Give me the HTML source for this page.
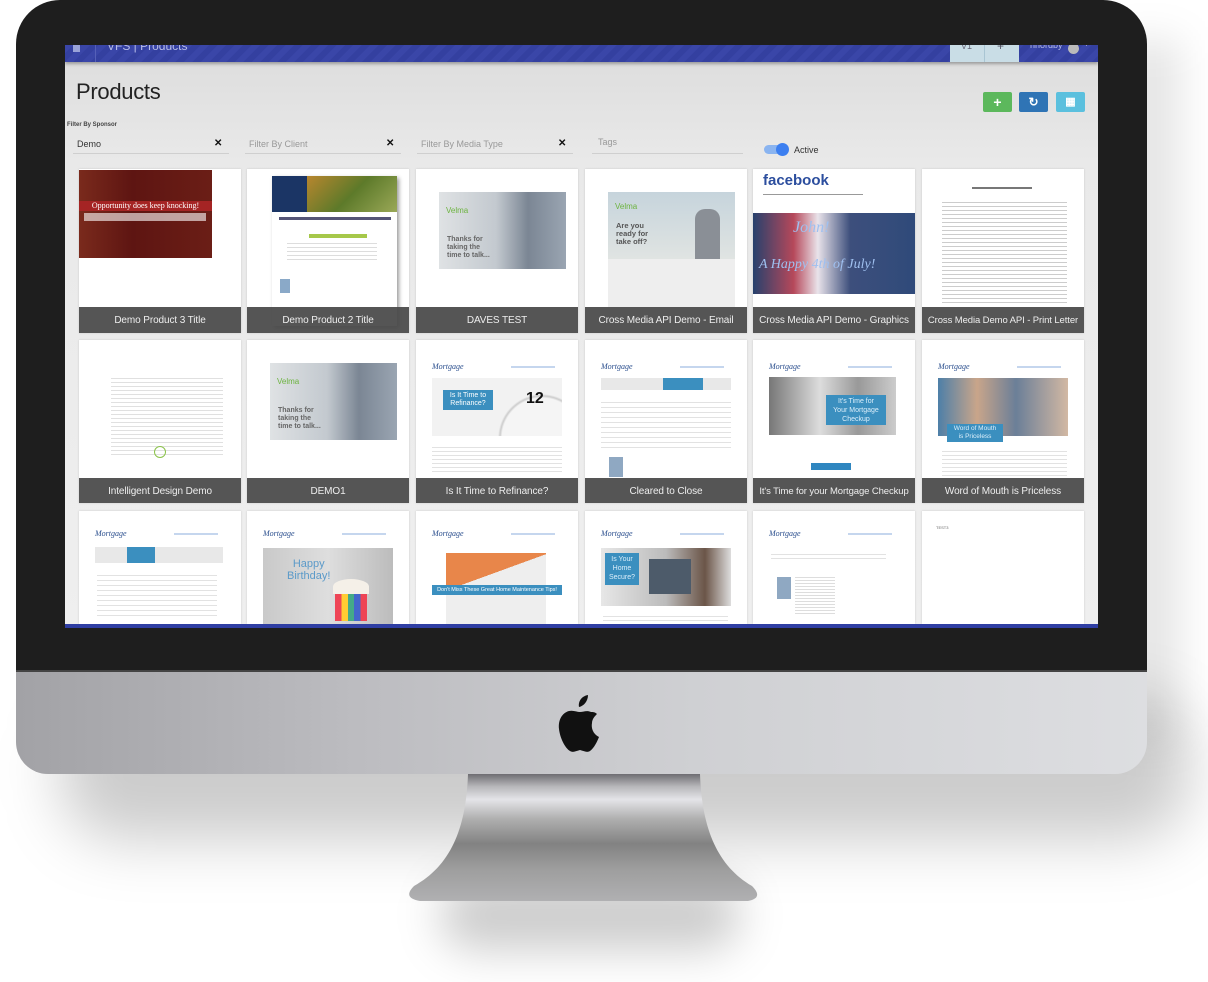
<!DOCTYPE html>
<html><head><meta charset="utf-8"><style>
*{margin:0;padding:0;box-sizing:border-box}
body{width:1208px;height:982px;background:#fff;position:relative;overflow:hidden;font-family:"Liberation Sans",sans-serif}
.a{position:absolute}
.card{position:absolute;width:162px;background:#fff;overflow:hidden;box-shadow:0 0 2px rgba(0,0,0,.15)}
.lbl{position:absolute;left:0;right:0;height:26px;background:rgba(72,72,72,.93);color:#eee;font-size:10px;text-align:center;line-height:27px;white-space:nowrap;letter-spacing:-.1px}
.ln{position:absolute;height:2px;background:#d6d6d6}
.logo{position:absolute;font-family:"Liberation Serif",serif;font-style:italic;color:#2b4f8e;font-size:8px}
.mail{position:absolute;font-size:3px;color:#4a7fc0;height:2px;width:44px;background:#c5d6ee}
.btn{position:absolute;top:92px;width:29px;height:20px;border-radius:2px;color:#fff;text-align:center;line-height:20px;font-size:14px;font-weight:bold}
.x{position:absolute;font-size:10px;font-weight:bold;color:#111}
.f{position:absolute;font-size:9px;color:#999}
.ul{position:absolute;height:1px;background:#cfcfcf}
.tab{position:absolute;height:12px;background:#e8e8e8}
</style></head><body>
<!-- shadow -->
<div class="a" style="left:60px;top:700px;width:1130px;height:140px;border-radius:60px;background:rgba(0,0,0,.2);filter:blur(30px)"></div>
<div class="a" style="left:440px;top:880px;width:300px;height:70px;border-radius:40px;background:rgba(0,0,0,.2);filter:blur(22px)"></div>
<div class="a" style="left:1120px;top:40px;width:60px;height:700px;background:rgba(0,0,0,.1);filter:blur(20px)"></div>
<!-- stand -->
<svg class="a" style="left:0;top:0" width="1208" height="982">
<defs><linearGradient id="st" x1="0" y1="774" x2="0" y2="901" gradientUnits="userSpaceOnUse">
<stop offset="0" stop-color="#6e6d72"/><stop offset=".1" stop-color="#b8b8bb"/><stop offset=".2" stop-color="#e4e4e8"/><stop offset=".35" stop-color="#b0b0b0"/><stop offset=".55" stop-color="#828282"/><stop offset=".75" stop-color="#9e9e9e"/><stop offset="1" stop-color="#b0b0b2"/></linearGradient></defs>
<path d="M468,774 L700,774 C702,830 718,866 752,886 Q764,898 748,901 L420,901 Q402,898 414,886 C450,866 466,830 468,774Z" fill="url(#st)"/>
</svg>
<!-- chin -->
<div class="a" style="left:16px;top:660px;width:1131px;height:114px;border-radius:0 0 32px 32px;background:linear-gradient(90deg,#a2a2a6 0%,#bcbcc0 30%,#cfd0d3 60%,#dddee1 100%)"></div>
<!-- apple -->
<svg class="a" style="left:555px;top:693px" width="50" height="60" viewBox="0 0 50 60">
<path d="M33,2 C33,8 29,13 24,14 C23,8 27,3 33,2Z M36,19 C32,17 28,19 25,19 C22,19 18,17 14,18 C7,20 3,27 4,36 C5,45 10,55 15,58 C18,60 21,58 25,57 C29,58 32,60 35,58 C39,55 42,49 44,44 C38,41 36,35 37,30 C37,26 40,23 42,21 C40,19 38,19 36,19Z" fill="#111"/>
</svg>
<!-- bezel -->
<div class="a" style="left:16px;top:0;width:1131px;height:672px;border-radius:44px 44px 0 0;background:#1e1e1e;border-bottom:2px solid #444"></div>
<!-- screen -->
<div class="a" style="left:65px;top:45px;width:1033px;height:583px;background:linear-gradient(180deg,#dcdcdc 0%,#e9e9e9 20%,#efefef 100%);overflow:hidden">
 <div class="a" style="left:0;top:0;width:1033px;height:17px;background:repeating-linear-gradient(135deg,#3a46a8 0 6px,#3440a0 6px 12px);box-shadow:0 2px 3px rgba(0,0,0,.3)">
  <div class="a" style="left:8px;top:0;width:7px;height:7px;background:#9aa3d8"></div>
  <div class="a" style="left:30px;top:0;width:1px;height:17px;background:#5560b8"></div>
  <div class="a" style="left:42px;top:-6px;color:#b8bde8;font-size:12px">VFS | Products</div>
  <div class="a" style="left:885px;top:0;width:69px;height:17px;background:#c9dde6"></div>
  <div class="a" style="left:919px;top:0;width:1px;height:17px;background:#a9c5d3"></div>
  <div class="a" style="left:896px;top:-4px;font-size:9px;color:#667">V1</div>
  <div class="a" style="left:932px;top:-6px;font-size:12px;color:#556">+</div>
  <div class="a" style="left:965px;top:-5px;font-size:9px;color:#b8bde8">nnordby</div>
  <div class="a" style="left:1003px;top:-2px;width:11px;height:11px;border-radius:50%;background:#bbb"></div>
  <div class="a" style="left:1018px;top:-4px;font-size:7px;color:#ccd">▼</div>
 </div>
 <div class="a" style="left:11px;top:34px;font-size:22px;color:#222;letter-spacing:-.3px">Products</div>
 <div class="a" style="left:2px;top:77px;font-size:6px;color:#444;font-weight:bold">Filter By Sponsor</div>
</div>
<div class="btn" style="left:983px;background:#5cb85c">+</div>
<div class="btn" style="left:1019px;background:#2f74b5;font-size:12px">↻</div>
<div class="btn" style="left:1056px;background:#5bc0de;font-size:11px">▦</div>
<div class="f" style="left:77px;top:139px;color:#333">Demo</div><div class="x" style="left:214px;top:138px">✕</div><div class="ul" style="left:73px;top:153px;width:156px"></div>
<div class="f" style="left:249px;top:139px">Filter By Client</div><div class="x" style="left:386px;top:138px">✕</div><div class="ul" style="left:245px;top:153px;width:156px"></div>
<div class="f" style="left:421px;top:139px">Filter By Media Type</div><div class="x" style="left:558px;top:138px">✕</div><div class="ul" style="left:417px;top:153px;width:156px"></div>
<div class="f" style="left:598px;top:137px">Tags</div><div class="ul" style="left:592px;top:153px;width:151px"></div>
<div class="a" style="left:764px;top:145px;width:24px;height:9px;border-radius:5px;background:#8ab4f0"></div>
<div class="a" style="left:776px;top:143px;width:13px;height:13px;border-radius:50%;background:#3c7ff0"></div>
<div class="a" style="left:794px;top:145px;font-size:9px;color:#333">Active</div>

<!-- Row 1 -->
<div class="card" style="left:79px;top:169px;height:164px">
 <div class="a" style="left:0;top:1px;width:133px;height:88px;background:linear-gradient(90deg,#7a2a1c,#5e1512 40%,#6b1e16)"></div>
 <div class="a" style="left:0;top:32px;width:133px;height:10px;background:#a52424;color:#fff;font-family:'Liberation Serif',serif;font-size:8px;text-align:center;line-height:10px">Opportunity does keep knocking!</div>
 <div class="a" style="left:5px;top:44px;width:122px;height:8px;background:rgba(255,255,255,.6)"></div>
 <div class="lbl" style="top:138px">Demo Product 3 Title</div>
</div>
<div class="card" style="left:247px;top:169px;height:164px">
 <div class="a" style="left:25px;top:7px;width:125px;height:150px;background:#fff;box-shadow:2px 2px 4px rgba(0,0,0,.4)"></div>
 <div class="a" style="left:25px;top:7px;width:35px;height:36px;background:#1b3565"></div>
 <div class="a" style="left:60px;top:7px;width:90px;height:36px;background:linear-gradient(135deg,#b8862e,#5d7a2a 50%,#9aa857)"></div>
 <div class="a" style="left:32px;top:48px;width:112px;height:3px;background:#557"></div>
 <div class="a" style="left:62px;top:65px;width:58px;height:4px;background:#a6c84a"></div>
 <div class="ln" style="left:40px;top:74px;width:90px;height:20px;background:repeating-linear-gradient(#ddd 0 1px,#fff 1px 4px)"></div>
 <div class="a" style="left:33px;top:110px;width:10px;height:14px;background:#8aa9c8"></div>
 <div class="lbl" style="top:138px">Demo Product 2 Title</div>
</div>
<div class="card" style="left:416px;top:169px;height:164px">
 <div class="a" style="left:23px;top:23px;width:127px;height:77px;background:linear-gradient(90deg,#dfe2e4 0%,#c3c9cf 45%,#7b8694 70%,#9aa5b2)"></div>
 <div class="a" style="left:30px;top:37px;font-size:8px;color:#6cb33f">Velma</div>
 <div class="a" style="left:31px;top:67px;font-size:7px;color:#666;font-weight:bold;line-height:8px">Thanks for<br>taking the<br>time to talk...</div>
 <div class="lbl" style="top:138px">DAVES TEST</div>
</div>
<div class="card" style="left:585px;top:169px;height:164px">
 <div class="a" style="left:23px;top:23px;width:127px;height:115px;background:#eee"></div>
 <div class="a" style="left:23px;top:23px;width:127px;height:67px;background:linear-gradient(180deg,#c6d4dc,#e0e4e2)"></div>
 <div class="a" style="left:110px;top:40px;width:25px;height:50px;background:#8a8f96;border-radius:10px 10px 0 0"></div>
 <div class="a" style="left:30px;top:33px;font-size:8px;color:#6cb33f">Velma</div>
 <div class="a" style="left:31px;top:53px;font-size:7.5px;color:#555;font-weight:bold;line-height:8px">Are you<br>ready for<br>take off?</div>
 <div class="lbl" style="top:138px">Cross Media API Demo - Email</div>
</div>
<div class="card" style="left:753px;top:169px;height:164px">
 <div class="a" style="left:10px;top:3px;font-size:15px;font-weight:bold;color:#2c4e9e">facebook</div>
 <div class="ln" style="left:10px;top:25px;width:100px;height:1px;background:#999"></div>
 <div class="a" style="left:0;top:44px;width:162px;height:81px;background:linear-gradient(90deg,#27416d 0%,#b6485a 25%,#e9e3ea 40%,#3d4f7c 60%,#2f4a7a 100%)"></div>
 <div class="a" style="left:40px;top:50px;font-family:'Liberation Serif',serif;font-style:italic;font-size:16px;color:#9fc0f0">John!</div>
 <div class="a" style="left:6px;top:88px;font-family:'Liberation Serif',serif;font-style:italic;font-size:14px;color:#9fc0f0">A Happy 4th of July!</div>
 <div class="lbl" style="top:138px">Cross Media API Demo - Graphics</div>
</div>
<div class="card" style="left:922px;top:169px;height:164px">
 <div class="ln" style="left:50px;top:18px;width:60px;height:2px;background:#777"></div>
 <div class="a" style="left:20px;top:30px;width:125px;height:105px;background:repeating-linear-gradient(#fff 0 3px,#ccc 3px 4px)"></div>
 <div class="lbl" style="top:138px;font-size:9.5px">Cross Media Demo API - Print Letter</div>
</div>

<!-- Row 2 -->
<div class="card" style="left:79px;top:340px;height:163px">
 <div class="a" style="left:32px;top:35px;width:112px;height:82px;background:repeating-linear-gradient(#fff 0 3px,#e0e0e0 3px 4px)"></div>
 <div class="a" style="left:75px;top:106px;width:12px;height:12px;border-radius:50%;border:1px solid #8bc34a"></div>
 <div class="lbl" style="top:138px">Intelligent Design Demo</div>
</div>
<div class="card" style="left:247px;top:340px;height:163px">
 <div class="a" style="left:23px;top:23px;width:127px;height:77px;background:linear-gradient(90deg,#dfe2e4 0%,#c3c9cf 45%,#7b8694 70%,#9aa5b2)"></div>
 <div class="a" style="left:30px;top:37px;font-size:8px;color:#6cb33f">Velma</div>
 <div class="a" style="left:31px;top:67px;font-size:7px;color:#666;font-weight:bold;line-height:8px">Thanks for<br>taking the<br>time to talk...</div>
 <div class="lbl" style="top:138px">DEMO1</div>
</div>
<div class="card" style="left:416px;top:340px;height:163px">
 <div class="logo" style="left:16px;top:22px">Mortgage</div><div class="mail" style="left:95px;top:26px"></div>
 <div class="a" style="left:16px;top:38px;width:130px;height:58px;background:radial-gradient(circle at 110px 60px,#f5f5f5 40px,#ccc 42px,#f2f2f2 44px)"></div>
 <div class="a" style="left:27px;top:50px;width:50px;height:20px;background:#3b8fbf;color:#fff;font-size:7px;line-height:8px;text-align:center;padding-top:2px">Is It Time to<br>Refinance?</div>
 <div class="a" style="left:110px;top:50px;font-size:16px;font-weight:bold;color:#111">12</div>
 <div class="a" style="left:16px;top:104px;width:130px;height:30px;background:repeating-linear-gradient(#fff 0 3px,#e2e2e2 3px 4px)"></div>
 <div class="lbl" style="top:138px">Is It Time to Refinance?</div>
</div>
<div class="card" style="left:585px;top:340px;height:163px">
 <div class="logo" style="left:16px;top:22px">Mortgage</div><div class="mail" style="left:95px;top:26px"></div>
 <div class="tab" style="left:16px;top:38px;width:130px"></div>
 <div class="tab" style="left:78px;top:38px;width:40px;background:#3b8fbf"></div>
 <div class="a" style="left:16px;top:58px;width:130px;height:50px;background:repeating-linear-gradient(#fff 0 4px,#e2e2e2 4px 5px)"></div>
 <div class="a" style="left:24px;top:117px;width:14px;height:20px;background:#8fa8c2"></div>
 <div class="lbl" style="top:138px">Cleared to Close</div>
</div>
<div class="card" style="left:753px;top:340px;height:163px">
 <div class="logo" style="left:16px;top:22px">Mortgage</div><div class="mail" style="left:95px;top:26px"></div>
 <div class="a" style="left:16px;top:37px;width:127px;height:58px;background:linear-gradient(90deg,#777,#ddd 40%,#999 70%,#ccc)"></div>
 <div class="a" style="left:73px;top:55px;width:60px;height:30px;background:#3b8fbf;color:#dbeefa;font-size:7px;text-align:center;line-height:9px;padding-top:2px">It's Time for<br>Your Mortgage<br>Checkup</div>
 <div class="a" style="left:58px;top:123px;width:40px;height:7px;background:#2f86c0"></div>
 <div class="lbl" style="top:138px;font-size:9.5px">It's Time for your Mortgage Checkup</div>
</div>
<div class="card" style="left:922px;top:340px;height:163px">
 <div class="logo" style="left:16px;top:22px">Mortgage</div><div class="mail" style="left:95px;top:26px"></div>
 <div class="a" style="left:16px;top:38px;width:130px;height:58px;background:linear-gradient(90deg,#4d7fa8,#c9a58a 30%,#6b7f98 60%,#d2b8a3)"></div>
 <div class="a" style="left:25px;top:84px;width:56px;height:18px;background:#3b8fbf;color:#dbeefa;font-size:6.5px;text-align:center;line-height:8px;padding-top:1px">Word of Mouth<br>is Priceless</div>
 <div class="a" style="left:20px;top:108px;width:125px;height:28px;background:repeating-linear-gradient(#fff 0 3px,#e2e2e2 3px 4px)"></div>
 <div class="lbl" style="top:138px">Word of Mouth is Priceless</div>
</div>

<!-- Row 3 -->
<div class="card" style="left:79px;top:511px;height:113px">
 <div class="logo" style="left:16px;top:18px">Mortgage</div><div class="mail" style="left:95px;top:22px"></div>
 <div class="tab" style="left:16px;top:36px;width:128px;height:16px"></div>
 <div class="tab" style="left:48px;top:36px;width:28px;height:16px;background:#3b8fbf"></div>
 <div class="a" style="left:18px;top:60px;width:120px;height:45px;background:repeating-linear-gradient(#fff 0 4px,#e2e2e2 4px 5px)"></div>
</div>
<div class="card" style="left:247px;top:511px;height:113px">
 <div class="logo" style="left:16px;top:18px">Mortgage</div><div class="mail" style="left:95px;top:22px"></div>
 <div class="a" style="left:16px;top:37px;width:130px;height:76px;background:linear-gradient(90deg,#c9c9c9,#dedede 50%,#bcbcbc)"></div>
 <div class="a" style="left:40px;top:47px;font-size:11px;color:#5b9ac9;text-align:center;line-height:12px">Happy<br>Birthday!</div>
 <div class="a" style="left:88px;top:80px;width:32px;height:30px;background:linear-gradient(90deg,#e45 0 20%,#fc3 20% 40%,#4a8 40% 60%,#46c 60% 80%,#e45 80%)"></div>
 <div class="a" style="left:86px;top:68px;width:36px;height:15px;border-radius:50% 50% 0 0;background:#f5f0e8"></div>
</div>
<div class="card" style="left:416px;top:511px;height:113px">
 <div class="logo" style="left:16px;top:18px">Mortgage</div><div class="mail" style="left:95px;top:22px"></div>
 <div class="a" style="left:30px;top:42px;width:100px;height:71px;background:linear-gradient(160deg,#e8864a 0 35%,#eee 35% 100%)"></div>
 <div class="a" style="left:16px;top:74px;width:130px;height:10px;background:#3b8fbf;color:#fff;font-size:5.5px;text-align:center;line-height:10px">Don't Miss These Great Home Maintenance Tips!</div>
</div>
<div class="card" style="left:585px;top:511px;height:113px">
 <div class="logo" style="left:16px;top:18px">Mortgage</div><div class="mail" style="left:95px;top:22px"></div>
 <div class="a" style="left:16px;top:37px;width:130px;height:58px;background:linear-gradient(90deg,#e7e7e7,#bbb 50%,#6b5548 80%,#ddd)"></div>
 <div class="a" style="left:64px;top:48px;width:42px;height:35px;background:#4d5b6a"></div>
 <div class="a" style="left:20px;top:42px;width:34px;height:32px;background:#3b8fbf;color:#dbeefa;font-size:7px;text-align:center;line-height:9px;padding-top:2px">Is Your<br>Home<br>Secure?</div>
 <div class="a" style="left:18px;top:102px;width:125px;height:10px;background:repeating-linear-gradient(#fff 0 3px,#e2e2e2 3px 4px)"></div>
</div>
<div class="card" style="left:753px;top:511px;height:113px">
 <div class="logo" style="left:16px;top:18px">Mortgage</div><div class="mail" style="left:95px;top:22px"></div>
 <div class="a" style="left:18px;top:40px;width:115px;height:10px;background:repeating-linear-gradient(#fff 0 3px,#e2e2e2 3px 4px)"></div>
 <div class="a" style="left:24px;top:66px;width:14px;height:22px;background:#8fa8c2"></div>
 <div class="a" style="left:42px;top:64px;width:40px;height:40px;background:repeating-linear-gradient(#fff 0 2px,#ddd 2px 3px)"></div>
</div>
<div class="card" style="left:922px;top:511px;height:113px">
 <div class="a" style="left:14px;top:14px;font-size:4px;color:#666">TEST3</div>
</div>
<div class="a" style="left:65px;top:624px;width:1033px;height:4px;background:#2f3ea3"></div>
</body></html>
